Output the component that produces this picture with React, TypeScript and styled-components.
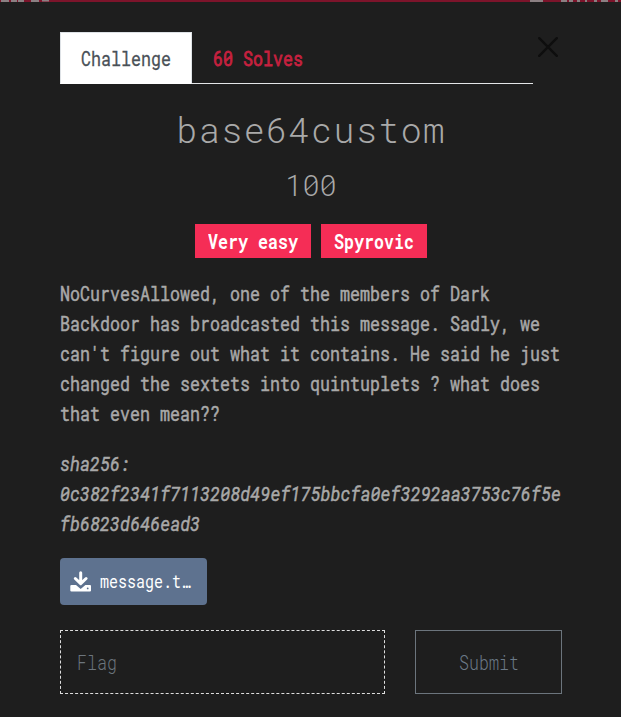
import React from "react";
import styled, { createGlobalStyle } from "styled-components";

const GlobalStyle = createGlobalStyle`
  * { box-sizing: border-box; }
  body {
    margin: 0;
    background: #1e1e1e;
    color: #a9a9a9;
    font-family: "Roboto Mono", "DejaVu Sans Mono", monospace;
    overflow: hidden;
  }
`;

const PageStrip = styled.svg`
  display: block;
  width: 621px;
  height: 2px;
  background: #7d142b;
`;

const Modal = styled.main`
  width: 621px;
  height: 715px;
  padding: 30px 59px 0 60px;
  display: flex;
  flex-direction: column;
`;

const Header = styled.header`
  display: flex;
  justify-content: space-between;
  height: 52px;
`;

const Tabs = styled.nav`
  display: flex;
  width: 473px;
  border-bottom: 1px solid #e4e6e8;
`;

const Tab = styled.a<{ $active?: boolean }>`
  width: 132px;
  height: 52px;
  padding: 0 0 0 19.5px;
  line-height: 51px;
  font-size: 20px;
  white-space: nowrap;
  color: ${(p) => (p.$active ? "#495057" : "#c6213f")};
  background: ${(p) => (p.$active ? "#fff" : "transparent")};
  border: 1px solid ${(p) => (p.$active ? "#dee2e6" : "transparent")};
  border-bottom-color: ${(p) => (p.$active ? "#fff" : "transparent")};
  -webkit-text-stroke: ${(p) => (p.$active ? "0.3px" : "0.8px")} currentColor;
`;

/* Squeezes the 12px advance of a 20px glyph to a 10px cell. */
const Narrow = styled.span<{ $scale?: number; $center?: boolean }>`
  display: inline-block;
  white-space: nowrap;
  transform: scaleX(${(p) => p.$scale ?? 0.8333});
  transform-origin: ${(p) => (p.$center ? "center" : "left")};
`;

const Close = styled.button`
  width: 28px;
  height: 30px;
  padding: 5px 4px;
  border: 0;
  background: none;
  svg { display: block; }
`;

const Title = styled.h1`
  margin: 23px 0 0;
  height: 44px;
  font-size: 35px;
  font-weight: 300;
  line-height: 44px;
  letter-spacing: 1.45px;
  text-align: center;
`;

const Points = styled.h2`
  margin: 14px 0 0;
  height: 40px;
  font-size: 30px;
  font-weight: 300;
  line-height: 40px;
  text-align: center;
`;

const Badges = styled.div`
  display: flex;
  justify-content: center;
  gap: 10px;
  margin: 19px 0 20px;
`;

const Badge = styled.span<{ $width: number }>`
  width: ${(p) => p.$width}px;
  height: 34px;
  padding-left: 13px;
  background: #f52d56;
  color: #fff;
  font-size: 20px;
  font-weight: 700;
  line-height: 35px;
`;

const Prose = styled.p<{ $italic?: boolean }>`
  width: ${(p) => (p.$italic ? 592 : 605)}px;
  margin: 0 0 20px;
  font-size: 20px;
  line-height: 30px;
  font-style: ${(p) => (p.$italic ? "italic" : "normal")};
  word-break: ${(p) => (p.$italic ? "break-all" : "normal")};
  transform: scaleX(${(p) => (p.$italic ? 0.8535 : 0.8333)});
  transform-origin: left;
  -webkit-text-stroke: 0.5px currentColor;
`;

const FileButton = styled.a`
  display: flex;
  align-items: center;
  width: 147px;
  height: 47px;
  margin: 0 0 25px;
  padding-left: 10px;
  gap: 8px;
  border-radius: 4px;
  background: #5e728f;
  color: #fff;
  font-size: 18px;
  line-height: 47px;
  svg { flex: none; }
`;

const Form = styled.form`
  display: flex;
  justify-content: space-between;
`;

const FlagField = styled.div`
  width: 325px;
  height: 64px;
  padding-left: 15.5px;
  border: 1px dashed #dedede;
  color: #6c757d;
  font-size: 20px;
  font-weight: 300;
  line-height: 62px;
`;

const Submit = styled.button`
  width: 147px;
  height: 64px;
  padding: 0 0 0 1px;
  border: 1px solid #6c757d;
  background: transparent;
  color: #6c7a88;
  font: 300 20px/60px "Roboto Mono", "DejaVu Sans Mono", monospace;
  text-align: center;
`;

export default function App() {
  return (
    <>
      <GlobalStyle />
      <PageStrip viewBox="0 0 621 2" aria-hidden="true">
        <path d="M1 1H9M11 1H17M18 1H24M31 1H39M42 .5H49M530 1H543M561 1H567M569 1H573M577 1H580M585 1H587M594 1H597M601 1H608M615 1H618" stroke="#8b7f82" strokeWidth="2" />
      </PageStrip>
      <Modal>
        <Header>
          <Tabs>
            <Tab $active><Narrow>Challenge</Narrow></Tab>
            <Tab><Narrow>60 Solves</Narrow></Tab>
          </Tabs>
          <Close aria-label="Close">
            <svg width="20" height="20" viewBox="0 0 20 20">
              <path d="M1.2 1.2 18.8 18.8M18.8 1.2 1.2 18.8" stroke="#0e0e0e" strokeWidth="2.4" strokeLinecap="round" />
            </svg>
          </Close>
        </Header>
        <Title>base64custom</Title>
        <Points><Narrow $scale={0.95} $center>100</Narrow></Points>
        <Badges>
          <Badge $width={116}><Narrow>Very easy</Narrow></Badge>
          <Badge $width={106}><Narrow>Spyrovic</Narrow></Badge>
        </Badges>
        <Prose>
          NoCurvesAllowed, one of the members of Dark Backdoor has broadcasted this message. Sadly, we can't figure out what it contains. He said he just changed the sextets into quintuplets ? what does that even mean??
        </Prose>
        <Prose $italic>
          sha256:<br />0c382f2341f7113208d49ef175bbcfa0ef3292aa3753c76f5efb6823d646ead3
        </Prose>
        <FileButton>
          <svg width="22" height="21" viewBox="0 0 22 21">
            <path d="M10.7 1.8V12M5.3 7.5 10.7 12.7 16.1 7.5" fill="none" stroke="#fff" strokeWidth="3" strokeLinecap="round" strokeLinejoin="round" />
            <path d="M1.5 14H6L10.7 18 15.4 14H20Q21 14 21 15V19.5Q21 20.6 20 20.6H1.5Q.3 20.6.3 19.5V15Q.3 14 1.5 14Z" fill="#fff" />
            <circle cx="17.7" cy="17.4" r=".9" fill="#5e728f" />
          </svg>
          <Narrow>message.t…</Narrow>
        </FileButton>
        <Form>
          <FlagField><Narrow>Flag</Narrow></FlagField>
          <Submit type="button"><Narrow $center>Submit</Narrow></Submit>
        </Form>
      </Modal>
    </>
  );
}
